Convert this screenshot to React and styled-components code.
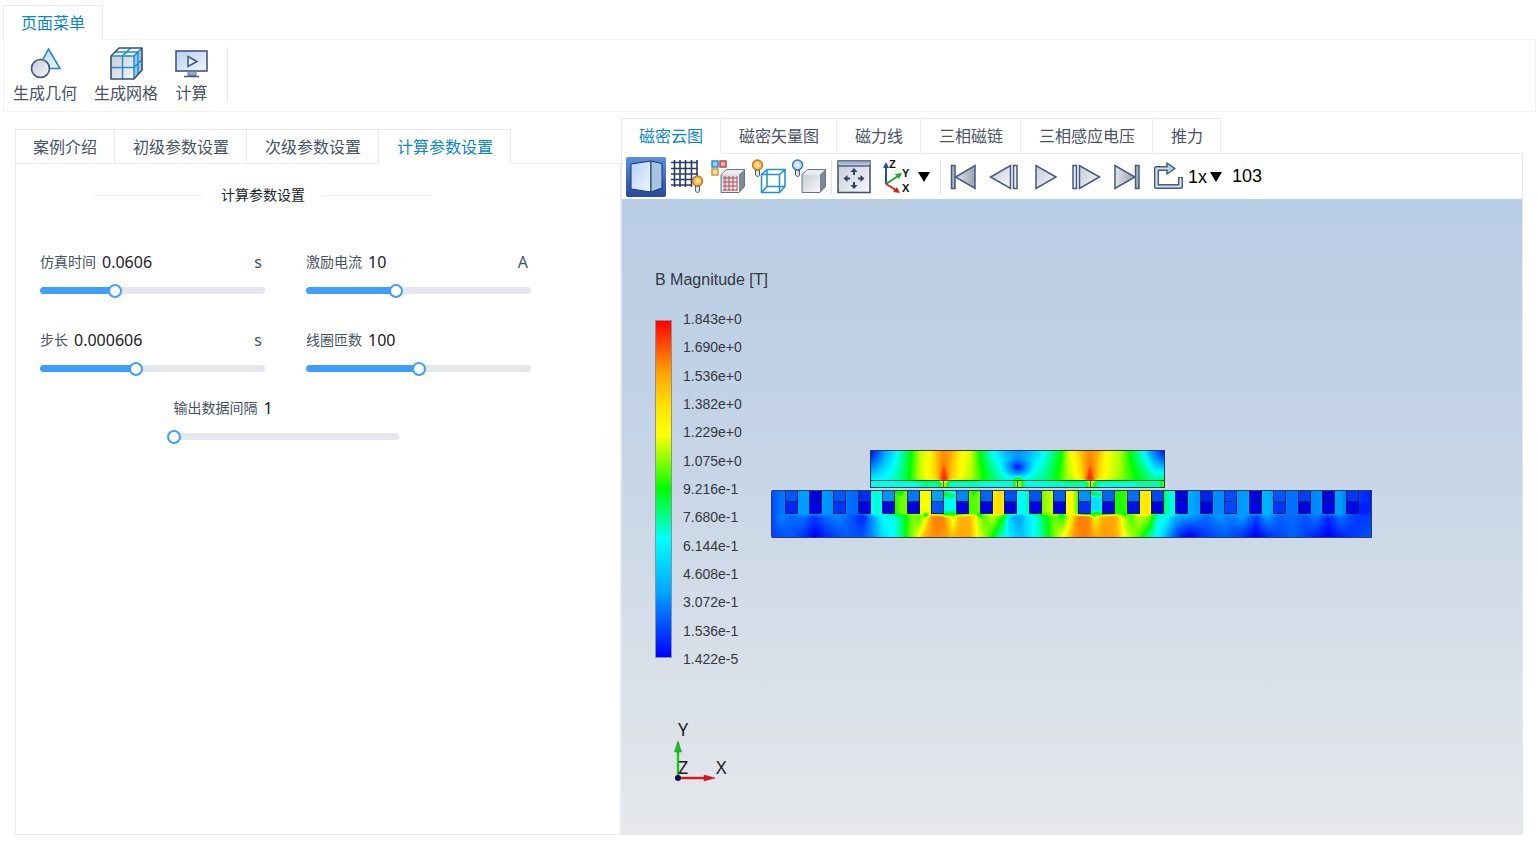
import React, { useState } from "react";
import styled, { createGlobalStyle } from "styled-components";

const SLOT_PITCH = 24.43;

// magnitude along x, 0 = lowest, 100 = highest
const MOVER_TOP = [[100, 2], [106, 10], [114, 22], [127, 34], [140, 50], [150, 64], [160, 68], [168, 78], [173, 82], [180, 78], [188, 69], [200, 64], [209, 50], [221, 35], [234, 25], [247, 19], [260, 25], [274, 34], [285, 45], [290, 50], [297, 64], [306, 70], [314, 79], [319, 82], [326, 78], [334, 68], [349, 62], [360, 49], [372, 35], [383, 17], [393, 3]];
const MOVER_BOTTOM = [[100, 33], [119, 36], [132, 44], [139, 51], [147, 61], [154, 66], [165, 72], [173, 88], [181, 72], [191, 66], [201, 61], [209, 54], [219, 47], [232, 38], [247, 35], [259, 38], [274, 42], [284, 49], [297, 61], [309, 68], [319, 88], [329, 69], [349, 60], [359, 54], [374, 47], [384, 42], [393, 46]];
const AIR_GAP = [[100, 35], [145, 35], [156, 41], [167, 38], [171, 60], [175, 60], [179, 36], [200, 37], [228, 35], [242, 37], [245, 60], [250, 60], [254, 35], [275, 35], [300, 39], [315, 38], [318, 62], [322, 58], [327, 36], [355, 35], [374, 40], [388, 39], [393, 58]];
const TEETH = [[0, 9], [8, 14], [32, 21], [56, 20], [81, 14], [92, 14], [101, 33], [105, 38], [111, 33], [123, 50], [130, 58], [136, 57], [148, 66], [158, 67], [171, 40], [176, 34], [182, 32], [197, 54], [208, 57], [221, 68], [227, 72], [233, 69], [244, 36], [252, 32], [266, 52], [276, 61], [291, 66], [301, 68], [316, 32], [325, 28], [331, 32], [343, 51], [354, 53], [366, 68], [378, 70], [388, 40], [398, 38], [407, 28], [422, 21], [447, 18], [471, 20], [496, 24], [520, 14], [545, 18], [569, 21], [585, 8], [601, 4]];
const YOKE_TOP = [[0, 8], [10, 19], [20, 13], [32, 17], [44, 8], [56, 16], [68, 19], [81, 11], [92, 3], [101, 20], [110, 32], [125, 36], [134, 48], [142, 59], [148, 52], [155, 66], [162, 83], [173, 84], [178, 72], [182, 60], [188, 76], [198, 77], [206, 65], [213, 54], [222, 65], [232, 52], [238, 27], [248, 20], [256, 30], [266, 34], [272, 46], [284, 58], [291, 49], [299, 66], [308, 85], [319, 82], [324, 64], [331, 77], [344, 79], [351, 66], [360, 53], [368, 64], [378, 62], [386, 37], [396, 35], [406, 23], [422, 21], [436, 14], [448, 21], [461, 17], [472, 23], [485, 9], [496, 23], [508, 12], [520, 15], [534, 11], [545, 18], [557, 5], [569, 17], [583, 8], [601, 8]];
const YOKE_BOTTOM = [[0, 9], [20, 12], [33, 7], [44, 0], [56, 6], [74, 12], [90, 10], [101, 18], [112, 30], [125, 35], [131, 44], [136, 52], [144, 62], [150, 70], [157, 79], [166, 82], [176, 79], [181, 74], [190, 78], [200, 76], [206, 66], [216, 58], [222, 50], [230, 38], [240, 30], [250, 25], [260, 32], [271, 40], [278, 51], [287, 62], [297, 71], [304, 81], [316, 83], [325, 77], [335, 80], [346, 77], [353, 66], [365, 58], [373, 50], [382, 37], [392, 28], [401, 16], [410, 5], [419, 0], [433, 8], [455, 12], [470, 8], [485, 0], [500, 8], [522, 13], [540, 7], [558, 0], [572, 6], [601, 11]];

const SLOTS = [
  ["#0057ff", "#0026f4"], ["#0000dc", "#0000e8"], ["#0057ff", "#0034f8"], ["#0030f0", "#0000dc"],
  ["#0094f4", "#0008dc"], ["#0078f4", "#0000dc"], ["#00a4ee", "#0058f8"], ["#0088f4", "#0000e4"],
  ["#0068f0", "#0000e4"], ["#0050f0", "#0000dc"], ["#0058f0", "#0000e4"], ["#0060f0", "#0000dc"],
  ["#0094f0", "#0030f0"], ["#0068f0", "#0008e0"], ["#0070f0", "#0010e8"], ["#0048f0", "#0000dc"],
  ["#0000dc", "#0000e8"], ["#0024f0", "#0000dc"], ["#004cfa", "#0048ff"], ["#0000dc", "#0000e8"],
  ["#0057ff", "#0034ff"], ["#0040f4", "#0000dc"], ["#0000dc", "#0000e8"], ["#0038f4", "#0008e8"],
];

const LEGEND = ["1.843e+0", "1.690e+0", "1.536e+0", "1.382e+0", "1.229e+0", "1.075e+0", "9.216e-1", "7.680e-1", "6.144e-1", "4.608e-1", "3.072e-1", "1.536e-1", "1.422e-5"];

const LEFT_TABS = ["案例介绍", "初级参数设置", "次级参数设置", "计算参数设置"];
const RIGHT_TABS = ["磁密云图", "磁密矢量图", "磁力线", "三相磁链", "三相感应电压", "推力"];

const gray = (v) => {
  const c = Math.round(v * 2.55);
  return `rgb(${c},${c},${c})`;
};

function FieldGradient({ id, data }) {
  return (
    <linearGradient id={id} gradientUnits="userSpaceOnUse" x1="0" x2="602" y1="0" y2="0">
      {data.map(([x, v]) => (
        <stop key={x} offset={x / 602} stopColor={gray(v)} />
      ))}
    </linearGradient>
  );
}

function Model() {
  return (
    <ModelSvg viewBox="0 0 602 90" role="img" aria-label="磁密云图">
      <defs>
        <FieldGradient id="moverTop" data={MOVER_TOP} />
        <FieldGradient id="moverBottom" data={MOVER_BOTTOM} />
        <FieldGradient id="airGap" data={AIR_GAP} />
        <FieldGradient id="teeth" data={TEETH} />
        <FieldGradient id="yokeTop" data={YOKE_TOP} />
        <FieldGradient id="yokeBottom" data={YOKE_BOTTOM} />
        <linearGradient id="fade" x1="0" x2="0" y1="0" y2="1">
          <stop offset="0" stopColor="#fff" stopOpacity="0" />
          <stop offset="1" stopColor="#fff" />
        </linearGradient>
        <mask id="fadeMover" maskUnits="userSpaceOnUse" x="90" y="0" width="320" height="32">
          <rect x="90" y="4" width="320" height="28" fill="url(#fade)" />
        </mask>
        <mask id="fadeYoke" maskUnits="userSpaceOnUse" x="-10" y="66" width="622" height="34">
          <rect x="-10" y="66" width="622" height="20" fill="url(#fade)" />
          <rect x="-10" y="86" width="622" height="14" fill="#fff" />
        </mask>
        <radialGradient id="cold">
          <stop offset="0" stopColor="#000" />
          <stop offset="1" stopColor="#303030" stopOpacity="0" />
        </radialGradient>
        {/* gray level -> rainbow scale of the legend */}
        <filter id="rainbow" filterUnits="userSpaceOnUse" x="-10" y="-10" width="622" height="110" colorInterpolationFilters="sRGB">
          <feGaussianBlur stdDeviation="1" />
          <feComponentTransfer>
            <feFuncR type="table" tableValues="0 0 0 0 1 1 1" />
            <feFuncG type="table" tableValues="0 0.5 1 1 1 0.5 0" />
            <feFuncB type="table" tableValues="1 1 1 0 0 0 0" />
          </feComponentTransfer>
        </filter>
        <clipPath id="moverClip"><rect x="100" y="2" width="293" height="37" /></clipPath>
        <clipPath id="statorClip"><rect x="1" y="41" width="600" height="48" /></clipPath>
      </defs>

      <g clipPath="url(#moverClip)">
        <g filter="url(#rainbow)">
          <rect x="90" y="-6" width="320" height="38" fill="url(#moverTop)" />
          <rect x="90" y="4" width="320" height="28" fill="url(#moverBottom)" mask="url(#fadeMover)" />
          <ellipse cx="247" cy="18" rx="18" ry="13" fill="url(#cold)" />
          <path d="M173 16l4 16h-8zM319 16l4 16h-8z" fill="#f0f0f0" />
          <circle cx="247" cy="32" r="4" fill={gray(56)} />
          <rect x="90" y="32" width="320" height="16" fill="url(#airGap)" />
        </g>
      </g>
      <rect x="99.500" y="1.500" width="294" height="37" fill="none" stroke="#2b3a4a" />
      <path d="M100 31.500h293" stroke="#21564f" />
      <path d="M172.500 31v8M246.500 31v8M319.500 31v8" stroke="#4c5a14" />

      <g clipPath="url(#statorClip)">
        <g filter="url(#rainbow)">
          <rect x="-10" y="34" width="622" height="33" fill="url(#teeth)" />
          <rect x="-10" y="66" width="622" height="34" fill="url(#yokeTop)" />
          <rect x="-10" y="66" width="622" height="34" fill="url(#yokeBottom)" mask="url(#fadeYoke)" />
          <path d="M170 42l14 4-2 3-11-2zM172 64l12-2 1 3-11 3zM318 42l13 3-1 3-11-2zM317 64l12-2 2 3-10 3z" fill={gray(50)} />
          <circle cx="129" cy="43" r="4" fill={gray(50)} />
          <circle cx="203" cy="43" r="3" fill={gray(50)} />
          <circle cx="155" cy="66" r="2" fill={gray(40)} />
          <circle cx="209" cy="66" r="2" fill={gray(40)} />
          <circle cx="291" cy="66" r="2" fill={gray(40)} />
          <circle cx="353" cy="65" r="2" fill={gray(44)} />
          <ellipse cx="591" cy="59" rx="6" ry="6" fill={gray(4)} />
          <rect x="391" y="40" width="3" height="24" fill={gray(52)} />
        </g>
        {SLOTS.map(([upper, lower], i) => {
          const x = Math.round(13.500 + i * SLOT_PITCH) + 0.500;
          return (
            <g key={i} stroke="#082468">
              <rect x={x} y="40.500" width="12" height="12" fill={upper} />
              <rect x={x} y="52.500" width="12" height="12" fill={lower} />
            </g>
          );
        })}
      </g>
      <rect x="0.500" y="41.500" width="600" height="47" rx="1" fill="none" stroke="#2b4058" />
    </ModelSvg>
  );
}

function Triad() {
  return (
    <TriadSvg viewBox="0 0 60 74">
      <path d="M7 65V30" stroke="#14c81e" strokeWidth="2.400" />
      <path d="M7 28l3.500 11h-7z" fill="#14c81e" stroke="#1c7a2c" strokeWidth="0.500" />
      <path d="M7 65h28" stroke="#e01414" strokeWidth="2.400" />
      <path d="M44 65l-11 3v-6z" fill="#e01414" stroke="#8a2020" strokeWidth="0.500" />
      <circle cx="7" cy="65" r="3" fill="#0a0a50" />
      <text x="7" y="23">Y</text>
      <text x="7" y="61">Z</text>
      <text x="45" y="61">X</text>
    </TriadSvg>
  );
}

function IconDefs() {
  return (
    <HiddenSvg aria-hidden="true">
      <defs>
        <linearGradient id="steel" x1="0" y1="0" x2="1" y2="1">
          <stop offset="0" stopColor="#c6cbd6" />
          <stop offset="1" stopColor="#f6f7f9" />
        </linearGradient>
        <linearGradient id="sky" x1="0" y1="0" x2="1" y2="1">
          <stop offset="0" stopColor="#b4d2f2" />
          <stop offset="1" stopColor="#eef5fc" />
        </linearGradient>
        <linearGradient id="solid" x1="0" y1="0" x2="1" y2="0">
          <stop offset="0" stopColor="#dfe3e9" />
          <stop offset="1" stopColor="#98a2b2" />
        </linearGradient>
        <radialGradient id="amber">
          <stop offset="0" stopColor="#ffedb0" />
          <stop offset="1" stopColor="#f9a528" />
        </radialGradient>
        <radialGradient id="ice">
          <stop offset="0" stopColor="#f2faff" />
          <stop offset="1" stopColor="#a4d2f4" />
        </radialGradient>
      </defs>
    </HiddenSvg>
  );
}

function GeometryIcon() {
  return (
    <svg width="33" height="33" viewBox="0 0 33 33">
      <path d="M19.500 2L31 21.500H9z" fill="url(#sky)" stroke="#1f87c4" strokeWidth="1.500" />
      <circle cx="11.500" cy="21.500" r="9" fill="url(#steel)" stroke="#46557a" strokeWidth="1.600" />
    </svg>
  );
}

function MeshIcon() {
  return (
    <svg width="33" height="33" viewBox="0 0 33 33">
      <path d="M1 9L9 1h23l-8 8z" fill="#eff6fc" />
      <path d="M24 9l8-8v22l-8 9z" fill="#9cc6e8" />
      <path d="M1 9h23v23H1z" fill="url(#steel)" />
      <path d="M12.500 32V9l8-8M1 20.500h23l8-8M5 5h23v22.500" fill="none" stroke="#1f8fd0" strokeWidth="1.500" />
      <path d="M24 9v23M1 9h23l8-8" fill="none" stroke="#1f8fd0" strokeWidth="1.500" />
      <path d="M1 32V9L9 1h23v22l-8 9z" fill="none" stroke="#3d4d75" strokeWidth="1.600" strokeLinejoin="round" />
    </svg>
  );
}

function ComputeIcon() {
  return (
    <svg width="33" height="33" viewBox="0 0 33 33">
      <rect x="1" y="4" width="31" height="20" fill="url(#sky)" stroke="#46557a" strokeWidth="1.600" />
      <path d="M13 9.500l9 5-9 5z" fill="#e4eefa" stroke="#46557a" strokeWidth="1.500" />
      <path d="M13 24.500h8v4h-8z" fill="#8fa8c8" stroke="#6a7890" />
      <path d="M9 29.500h15" stroke="#46557a" strokeWidth="1.500" />
    </svg>
  );
}

const Bulb = ({ x, y, fill, edge }) => (
  <g>
    <path d={`M${x - 2} ${y + 5}h4v5l-2 2-2-2z`} fill="#dfe5ee" stroke="#46557a" />
    <circle cx={x} cy={y} r="5" fill={`url(#${fill})`} stroke={edge} strokeWidth="1.400" />
  </g>
);

const Cube = ({ x }) => (
  <g strokeLinejoin="round">
    <path d={`M${x} 17.500l5.500-5h18l-5.500 5z`} fill="#e8ebf0" />
    <path d={`M${x + 18} 17.500l5.500-5v17l-5.500 6z`} fill="#7d879a" />
    <path d={`M${x} 17.500h18v18h-18z`} fill="url(#steel)" />
    <path d={`M${x} 35.500v-18l5.500-5h18v17l-5.500 6z`} fill="none" stroke="#687489" />
  </g>
);

const TOOL_ICONS = {
  shaded: (
    <g stroke="#1c3564" strokeLinejoin="round">
      <path d="M5 7l20-3v31L5 32z" fill="url(#sky)" />
      <path d="M25 4l11 2.500V31l-11 4z" fill="#a6c4e2" />
    </g>
  ),
  grid: (
    <g>
      <path d="M7.500 3v27M13 3v27M18.500 3v27M24.500 3v27M30 3v20M4 5.500h27M4 11.500h27M4 17h27M4 22.500h22M4 28h20" stroke="#2c3c68" strokeWidth="1.600" />
      <Bulb x={30.500} y={24} fill="amber" edge="#b97a28" />
    </g>
  ),
  mesh: (
    <g>
      <rect x="4" y="4" width="6" height="6" fill="#8fd4f6" stroke="#1f87c4" strokeWidth="1.400" />
      <rect x="12" y="4" width="6" height="6" fill="#f2a8a8" stroke="#b43c3c" strokeWidth="1.400" />
      <rect x="4" y="12" width="6" height="6" fill="#ffe1a0" stroke="#e08a28" strokeWidth="1.400" />
      <Cube x={13} />
      <path d="M15 21h14M15 25h14M15 29h14M15 33h14M17 19v15M21 19v15M25 19v15M29 19v15" stroke="#b84c54" />
    </g>
  ),
  edges: (
    <g>
      <path d="M12.500 17.500h18v18h-18zM18 12.500h18v17H18zM12.500 17.500l5.500-5M30.500 17.500l5.500-5M12.500 35.500l5.500-6M30.500 35.500l5.500-6" fill="none" stroke="#2090d0" strokeWidth="1.500" />
      <Bulb x={8.500} y={8} fill="amber" edge="#c07c22" />
    </g>
  ),
  faces: (
    <g>
      <Cube x={12} />
      <Bulb x={7.500} y={8} fill="ice" edge="#3f78a8" />
    </g>
  ),
  fit: (
    <g>
      <rect x="4" y="4" width="32" height="31.500" fill="url(#steel)" stroke="#46557a" strokeWidth="1.600" />
      <path d="M4 6h32" stroke="#9fb6d4" strokeWidth="3" />
      <path d="M4 9h32" stroke="#46557a" strokeWidth="1.400" />
      <path d="M20 11l-3.500 4h7zM20 32l-3.500-4h7zM9.500 21.500l4-3.500v7zM30.500 21.500l-4-3.500v7z" fill="#2e4069" />
      <path d="M20 14v4M20 25v4M12 21.500h4M24 21.500h4" stroke="#2e4069" strokeWidth="2" />
    </g>
  ),
  first: (
    <g stroke="#46597f" strokeWidth="1.500">
      <path d="M32 8.500v23L12.500 20z" fill="url(#solid)" />
      <path d="M8.500 8.500H12v23H8.500z" fill="#aab4c4" />
    </g>
  ),
  prev: (
    <g stroke="#46597f" strokeWidth="1.500">
      <path d="M26.500 8.500v23L6.500 20z" fill="url(#steel)" />
      <path d="M29.500 8.500H33v23h-3.500z" fill="#e6edf6" />
    </g>
  ),
  play: <path d="M11 8.500v23L31 20z" fill="url(#steel)" stroke="#46597f" strokeWidth="1.500" />,
  next: (
    <g stroke="#46597f" strokeWidth="1.500">
      <path d="M13.500 8.500v23l20-11.500z" fill="url(#steel)" />
      <path d="M7 8.500h3.500v23H7z" fill="#e6edf6" />
    </g>
  ),
  last: (
    <g stroke="#46597f" strokeWidth="1.500">
      <path d="M8 8.500v23L28 20z" fill="url(#solid)" />
      <path d="M28.500 8.500H32v23h-3.500z" fill="#aab4c4" />
    </g>
  ),
  loop: (
    <g fill="none" strokeLinejoin="round">
      <path d="M20 11.500H8.500v18h24v-9.500" stroke="#46597f" strokeWidth="5" />
      <path d="M19 6l8 5.500-8 5.500z" fill="#a9cdf0" stroke="#46597f" strokeWidth="1.500" />
      <path d="M21 11.500H8.500v18h24v-8.500" stroke="#cfe0f2" strokeWidth="2.200" />
    </g>
  ),
};

const Tool = ({ icon, label, active }) => (
  <ToolButton aria-label={label} title={label} $active={active}>
    <svg width="40" height="40" viewBox="0 0 40 40">{TOOL_ICONS[icon]}</svg>
  </ToolButton>
);

const Caret = () => (
  <CaretSvg viewBox="0 0 12 10"><path d="M0 0h12L6 10z" /></CaretSvg>
);

function AxisIcon() {
  return (
    <AxisSvg viewBox="0 0 32 40">
      <path d="M5 27V10" stroke="#2348c4" strokeWidth="2" />
      <path d="M5 5l3 6H2z" fill="#2348c4" />
      <path d="M5 27l12-8" stroke="#1ca82a" strokeWidth="2" />
      <path d="M21 16l-3 6-4-5z" fill="#1ca82a" />
      <path d="M5 27l10 6" stroke="#e02020" strokeWidth="2" />
      <path d="M19 36l-7-1 4-5z" fill="#e02020" />
      <text x="8" y="11">Z</text>
      <text x="21" y="20">Y</text>
      <text x="21" y="35">X</text>
    </AxisSvg>
  );
}

function Slider({ id, label, unit, value: initial, min, max }) {
  const [value, setValue] = useState(initial);
  const fill = ((value - min) / (max - min)) * 100;
  return (
    <Field>
      <FieldHead>
        <label htmlFor={id}>{label}</label>
        <Value htmlFor={id}>{value}</Value>
        {unit && <Unit>{unit}</Unit>}
      </FieldHead>
      <Rail style={{ backgroundSize: `${fill}% 100%` }}>
        <Range id={id} type="range" min={min} max={max} step="any" value={value} onChange={(e) => setValue(Number(e.target.value))} />
      </Rail>
    </Field>
  );
}

function Tabs({ items, active, onPick, wide }) {
  return (
    <TabList role="tablist">
      {items.map((name, i) => (
        <Tab key={name} role="tab" aria-selected={i === active} $active={i === active} $wide={wide} onClick={() => onPick(i)}>
          {name}
        </Tab>
      ))}
    </TabList>
  );
}

function App() {
  const [leftTab, setLeftTab] = useState(3);
  const [rightTab, setRightTab] = useState(0);

  return (
    <>
      <GlobalStyle />
      <IconDefs />
      <Page>
        <Ribbon>
          <Tabs items={["页面菜单"]} active={0} onPick={() => {}} />
          <RibbonBody>
            <RibbonButton><GeometryIcon />生成几何</RibbonButton>
            <RibbonButton><MeshIcon />生成网格</RibbonButton>
            <RibbonButton><ComputeIcon />计算</RibbonButton>
            <RibbonLine />
          </RibbonBody>
        </Ribbon>

        <Main>
          <ParamPanel>
            <Tabs items={LEFT_TABS} active={leftTab} onPick={setLeftTab} />
            <ParamBody>
              <Heading>计算参数设置</Heading>
              <Form>
                <Slider id="time" label="仿真时间" unit="s" value={0.0606} min={0.0006} max={0.1806} />
                <Slider id="current" label="激励电流" unit="A" value={10} min={0} max={25} />
                <Slider id="step" label="步长" unit="s" value={0.000606} min={0} max={0.00142} />
                <Slider id="turns" label="线圈匝数" value={100} min={0} max={200} />
              </Form>
              <LastRow>
                <Slider id="interval" label="输出数据间隔" value={1} min={1} max={10} />
              </LastRow>
            </ParamBody>
          </ParamPanel>

          <ResultPanel>
            <Tabs items={RIGHT_TABS} active={rightTab} onPick={setRightTab} wide />
            <ResultBody>
              <Toolbar>
                <ToolGroup>
                  <Tool icon="shaded" label="着色" active />
                  <Tool icon="grid" label="网格线" />
                  <Tool icon="mesh" label="网格" />
                  <Tool icon="edges" label="边线" />
                  <Tool icon="faces" label="面" />
                </ToolGroup>
                <Divider />
                <Tool icon="fit" label="适应窗口" />
                <AxisButton aria-label="视角"><AxisIcon /><Caret /></AxisButton>
                <Divider />
                <ToolGroup>
                  <Tool icon="first" label="第一帧" />
                  <Tool icon="prev" label="上一帧" />
                  <Tool icon="play" label="播放" />
                  <Tool icon="next" label="下一帧" />
                  <Tool icon="last" label="最后一帧" />
                  <Tool icon="loop" label="循环" />
                </ToolGroup>
                <Speed>
                  <SpeedSelect aria-label="速度" defaultValue="1x">
                    <option>1x</option>
                    <option>2x</option>
                    <option>4x</option>
                  </SpeedSelect>
                  <Caret />
                </Speed>
                <Frame>103</Frame>
              </Toolbar>
              <Viewport>
                <Model />
                <Legend>
                  <LegendTitle>B Magnitude [T]</LegendTitle>
                  <LegendScale>
                    <ColorBar />
                    <Ticks>
                      {LEGEND.map((t) => <li key={t}>{t}</li>)}
                    </Ticks>
                  </LegendScale>
                </Legend>
                <Triad />
              </Viewport>
            </ResultBody>
          </ResultPanel>
        </Main>
      </Page>
    </>
  );
}

const GlobalStyle = createGlobalStyle`
  * {
    box-sizing: border-box;
  }
  body {
    margin: 0;
    background: #fff;
    color: #485366;
    font-family: "Noto Sans", "Noto Sans CJK SC", sans-serif;
    font-size: 16px;
  }
  button, select {
    font: inherit;
    color: inherit;
    background: none;
    border: 0;
    padding: 0;
    cursor: pointer;
  }
`
const HiddenSvg = styled.svg`
  position: absolute;
  width: 0;
  height: 0;
`
const Page = styled.div`
  display: flex;
  flex-direction: column;
  min-height: 100vh;
  padding: 5px 2px 15px 3px;
`
const TabList = styled.div`
  display: flex;
`
const Tab = styled.button`
  height: ${(p) => (p.$wide ? 36 : 35)}px;
  padding: 0 17px 2px;
  white-space: nowrap;
  color: ${(p) => (p.$active ? "#0a86d1" : "#485366")};
  border: 1px solid #e9ebef;
  border-bottom-color: ${(p) => (p.$active ? "#fff" : "#e9ebef")};
  margin-bottom: -1px;
  position: relative;

  & + & {
    border-left: 0;
    padding-left: ${(p) => (p.$wide ? 18 : 17)}px;
  }
`
const Ribbon = styled.header``
const RibbonBody = styled.div`
  display: flex;
  align-items: flex-start;
  height: 73px;
  padding-top: 7px;
  border: 1px solid #f0f1f3;
`
const RibbonButton = styled.button`
  display: flex;
  flex-direction: column;
  align-items: center;
  padding: 0 9px 0 8px;
  line-height: 26px;

  &:first-child {
    padding-left: 9px;
  }
`
const RibbonLine = styled.i`
  width: 1px;
  height: 55px;
  margin-left: 10px;
  background: #e8e8ea;
`
const Main = styled.main`
  flex: 1;
  display: grid;
  grid-template-columns: 606fr 902fr;
  padding: 6px 13px 0 12px;
`
const ParamPanel = styled.section`
  display: flex;
  flex-direction: column;
  margin-top: 11px;
  min-width: 0;
`
const ParamBody = styled.div`
  flex: 1;
  padding: 19px 24px;
  border: 1px solid #ececee;
`
const Heading = styled.h2`
  display: flex;
  align-items: center;
  gap: 17px;
  width: 338px;
  margin: 0 0 43px 54px;
  font-size: 14px;
  font-weight: 400;
  line-height: 24px;
  color: #20242c;

  &::before,
  &::after {
    content: "";
    flex: 1;
    height: 1px;
    background: #eeeff1;
  }
`
const Form = styled.div`
  display: grid;
  grid-template-columns: repeat(2, 225px);
  gap: 34px 41px;
`
const LastRow = styled.div`
  width: 492px;
  margin-top: 24px;
  display: flex;
  justify-content: center;
`
const Field = styled.div`
  width: 225px;
`
const FieldHead = styled.div`
  display: flex;
  align-items: center;
  height: 24px;
  margin-bottom: 13px;
  line-height: 24px;

  label {
    font-size: 14px;
  }
`
const Value = styled.output`
  margin-left: 6px;
  color: #1d2129;
`
const Unit = styled.span`
  margin-left: auto;
  padding-right: 3px;
`
const Rail = styled.div`
  height: 7px;
  border-radius: 4px;
  background: #e4e7ed linear-gradient(#409eff, #409eff) no-repeat;
`
const Range = styled.input`
  display: block;
  appearance: none;
  width: calc(100% + 14px);
  height: 7px;
  margin: 0 -7px;
  background: none;

  &::-webkit-slider-thumb {
    appearance: none;
    width: 14px;
    height: 14px;
    border: 2px solid #409eff;
    border-radius: 50%;
    background: #fff;
  }
`
const ResultPanel = styled.section`
  display: flex;
  flex-direction: column;
  min-width: 0;
`
const ResultBody = styled.div`
  flex: 1;
  display: flex;
  flex-direction: column;
  border: 1px solid #e4e7ed;
`
const Toolbar = styled.div`
  display: flex;
  align-items: center;
  height: 45px;
  padding-left: 4px;
  color: #000;
  font-family: "Liberation Sans", Arial, sans-serif;
  font-size: 18px;
`
const ToolGroup = styled.div`
  display: flex;
  gap: 1px;
`
const ToolButton = styled.button`
  width: 40px;
  height: 40px;
  border-radius: 2px;
  background: ${(p) => (p.$active ? "linear-gradient(#5e8fe0, #24489e)" : "none")};

  svg {
    display: block;
  }
`
const Divider = styled.i`
  width: 1px;
  height: 34px;
  margin: 0 2px 0 1px;
  background: #dfe1e5;
`
const AxisButton = styled.button`
  display: flex;
  align-items: center;
  gap: 5px;
  margin: 0 9px 0 7px;
`
const AxisSvg = styled.svg`
  width: 32px;
  height: 40px;

  text {
    font: 700 11px "Liberation Sans", Arial, sans-serif;
    fill: #111;
  }
`
const CaretSvg = styled.svg`
  width: 12px;
  height: 10px;
  pointer-events: none;
`
const Speed = styled.div`
  display: flex;
  align-items: center;
`
const SpeedSelect = styled.select`
  appearance: none;
  width: 22px;
`
const Frame = styled.span`
  margin-left: 10px;
`
const Viewport = styled.div`
  position: relative;
  flex: 1;
  display: flex;
  align-items: center;
  justify-content: center;
  padding-bottom: 46px;
  min-height: 600px;
  background: linear-gradient(#b9cde5, #c4d3e6 35%, #e6e8eb);
  font-family: "Liberation Sans", Arial, sans-serif;
`
const ModelSvg = styled.svg`
  width: 602px;
  height: 90px;
`
const Legend = styled.div`
  position: absolute;
  left: 33px;
  top: 71px;
  color: #35383d;
`
const LegendTitle = styled.div`
  line-height: 20px;
`
const LegendScale = styled.div`
  display: flex;
  align-items: center;
  gap: 11px;
  margin-top: 21px;
`
const ColorBar = styled.div`
  width: 17px;
  height: 338px;
  border: 1px solid #8a90a0;
  background: linear-gradient(#f00, #ffa000 15%, #ffe600 26%, #ff0 34%, #0f0 50%, #0ff 65%, #0af 80%, #00f);
`
const Ticks = styled.ul`
  display: flex;
  flex-direction: column;
  justify-content: space-between;
  height: 356px;
  margin: 0;
  padding: 0;
  list-style: none;
  font-size: 14px;
  line-height: 16px;
`
const TriadSvg = styled.svg`
  position: absolute;
  left: 49px;
  bottom: 47px;
  width: 60px;
  height: 74px;

  text {
    font: 18px "Noto Sans", sans-serif;
    fill: #1c1c1c;
  }
`

export default App;
